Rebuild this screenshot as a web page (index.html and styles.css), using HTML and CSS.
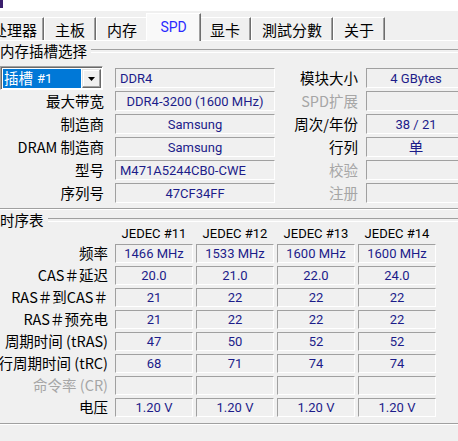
FILE: index.html
```html
<!DOCTYPE html>
<html lang="zh-CN">
<head>
<meta charset="utf-8">
<title>CPU-Z SPD</title>
<link rel="stylesheet" href="styles.css">
</head>
<body>
<div class="topbar"><span class="appmark"></span></div>
<nav class="tabs">
  <div class="tab first">处理器</div>
  <div class="tab">主板</div>
  <div class="tab">内存</div>
  <div class="tab active">SPD</div>
  <div class="tab">显卡</div>
  <div class="tab">測試分數</div>
  <div class="tab">关于</div>
</nav>
<main class="pane">
  <section class="group slots">
    <div class="legend">内存插槽选择</div>
    <div class="slot-grid">
      <div class="combo">
        <span class="combo-sel">插槽 <span class="lat">#1</span></span>
        <span class="combo-btn"><svg width="7" height="4" viewBox="0 0 7 4"><path d="M0 0h7L3.5 4z" fill="#000"/></svg></span>
      </div>
      <div class="val left">DDR4</div>
      <div class="lbl">模块大小</div>
      <div class="val">4 GBytes</div>

      <div class="lbl">最大带宽</div>
      <div class="val">DDR4-3200 (1600 MHz)</div>
      <div class="lbl dim">SPD扩展</div>
      <div class="val"></div>

      <div class="lbl">制造商</div>
      <div class="val">Samsung</div>
      <div class="lbl">周次/年份</div>
      <div class="val">38 / 21</div>

      <div class="lbl">DRAM 制造商</div>
      <div class="val">Samsung</div>
      <div class="lbl">行列</div>
      <div class="val cjk">单</div>

      <div class="lbl">型号</div>
      <div class="val left">M471A5244CB0-CWE</div>
      <div class="lbl dim">校验</div>
      <div class="val"></div>

      <div class="lbl">序列号</div>
      <div class="val">47CF34FF</div>
      <div class="lbl dim">注册</div>
      <div class="val"></div>
    </div>
  </section>

  <section class="group timings">
    <div class="legend">时序表</div>
    <div class="timing-grid">
      <div class="hdr-blank"></div>
      <div class="hdr">JEDEC #11</div>
      <div class="hdr">JEDEC #12</div>
      <div class="hdr">JEDEC #13</div>
      <div class="hdr">JEDEC #14</div>

      <div class="lbl">频率</div>
      <div class="val">1466 MHz</div>
      <div class="val">1533 MHz</div>
      <div class="val">1600 MHz</div>
      <div class="val">1600 MHz</div>

      <div class="lbl">CAS＃延迟</div>
      <div class="val">20.0</div>
      <div class="val">21.0</div>
      <div class="val">22.0</div>
      <div class="val">24.0</div>

      <div class="lbl">RAS＃到CAS＃</div>
      <div class="val">21</div>
      <div class="val">22</div>
      <div class="val">22</div>
      <div class="val">22</div>

      <div class="lbl">RAS＃预充电</div>
      <div class="val">21</div>
      <div class="val">22</div>
      <div class="val">22</div>
      <div class="val">22</div>

      <div class="lbl">周期时间 (tRAS)</div>
      <div class="val">47</div>
      <div class="val">50</div>
      <div class="val">52</div>
      <div class="val">52</div>

      <div class="lbl">行周期时间 (tRC)</div>
      <div class="val">68</div>
      <div class="val">71</div>
      <div class="val">74</div>
      <div class="val">74</div>

      <div class="lbl dim">命令率 (CR)</div>
      <div class="val"></div>
      <div class="val"></div>
      <div class="val"></div>
      <div class="val"></div>

      <div class="lbl">电压</div>
      <div class="val">1.20 V</div>
      <div class="val">1.20 V</div>
      <div class="val">1.20 V</div>
      <div class="val">1.20 V</div>
    </div>
  </section>
</main>
</body>
</html>
```
FILE: styles.css
```css
* { box-sizing: border-box; }
html, body { margin: 0; padding: 0; }
body {
  width: 458px;
  height: 441px;
  overflow: hidden;
  background: #f0f0f0;
  font-family: "Noto Sans CJK SC", "Noto Sans", sans-serif;
  font-size: 14.5px;
  color: #000;
}

.topbar { height: 11px; background: #fff; }
.appmark { display: block; width: 3px; height: 8px; background: #3b1f6d; }

.tabs {
  display: flex;
  align-items: flex-end;
  height: 29px;
  margin-left: -19px;
  position: relative;
  z-index: 1;
}
.tab {
  height: 23px;
  padding: 0 10px;
  display: flex;
  align-items: center;
  justify-content: center;
  font-size: 15px;
  line-height: 1;
  white-space: nowrap;
  background: #f0f0f0;
  border-top: 1px solid #fff;
  border-left: 1px solid #fff;
  border-right: 1px solid #6d6d6d;
  box-shadow: inset -1px 0 #a0a0a0;
}
.tab.first { padding-right: 6px; }
.tab.active {
  width: 55px;
  height: 28px;
  margin: 0 -2px -1px;
  padding: 0 0 1px;
  color: #2a2aff;
  font-family: Roboto, "Noto Sans", sans-serif;
  font-size: 14px;
  background: #f9f9f9;
  position: relative;
  z-index: 2;
}

.pane { border-top: 1px solid #fff; }

.group {
  border-bottom: 1px solid #a0a0a0;
  box-shadow: 0 1px #fff;
}
.legend {
  display: flex;
  align-items: center;
  height: 18px;
  margin-top: 1px;
  line-height: 1;
  white-space: nowrap;
}
.legend::after {
  content: "";
  flex: 1;
  height: 2px;
  margin-left: 4px;
  border-top: 1px solid #a0a0a0;
  border-bottom: 1px solid #fff;
}
.slots { padding-bottom: 5px; }
.timings { padding-bottom: 6px; }
.timings .legend { margin-top: 2px; }

.lbl {
  display: flex;
  align-items: center;
  justify-content: flex-end;
  white-space: nowrap;
  line-height: 1;
}
.lbl.dim { color: #a6a6a6; }

.val {
  display: flex;
  align-items: center;
  justify-content: center;
  padding: 0 5px;
  border: 1px solid;
  border-color: #a0a0a0 #fff #fff #a0a0a0;
  background: #f0f0f0;
  color: #1c1c8a;
  font-family: Roboto, "Noto Sans", sans-serif;
  font-size: 13px;
  line-height: 1;
  white-space: nowrap;
  overflow: hidden;
}
.val.left { justify-content: flex-start; padding-left: 4px; }
.val.cjk { font-family: "Noto Sans CJK SC", sans-serif; font-size: 14.5px; }

.slot-grid {
  display: grid;
  width: 466px;
  margin-top: 8px;
  grid-template-columns: 104px 171px 83px 108px;
  grid-auto-rows: 20px;
  row-gap: 3px;
}
.slot-grid > .val:nth-child(4n+2) { margin-left: 11px; }
.slot-grid > .val:nth-child(4n) { margin-left: 8px; }

.combo {
  display: flex;
  height: 24px;
  margin: -2px 1px 0 0;
  padding: 1px;
  background: #fff;
  border: 1px solid;
  border-color: #a0a0a0 #fff #fff #a0a0a0;
  box-shadow: inset 1px 1px #696969;
}
.combo-sel {
  flex: 1;
  display: flex;
  align-items: center;
  padding-left: 1px;
  margin: 1px 1px 0 1px;
  background: #0078d7;
  color: #fff;
  font-size: 14.5px;
  line-height: 1;
  white-space: nowrap;
}
.combo-sel .lat { font-family: Roboto, sans-serif; font-size: 13px; margin-left: 4px; }
.combo-btn {
  width: 19px;
  margin-top: 1px;
  display: flex;
  align-items: center;
  justify-content: center;
  background: #f0f0f0;
  border: 1px solid;
  border-color: #e3e3e3 #696969 #696969 #e3e3e3;
  box-shadow: inset -1px -1px #a0a0a0, inset 1px 1px #fff;
}

.timing-grid {
  display: grid;
  grid-template-columns: 112px repeat(4, 78px);
  grid-template-rows: 14px;
  grid-auto-rows: 19px;
  column-gap: 3px;
  row-gap: 3px;
  margin-top: -2px;
}
.timing-grid .lbl { padding-right: 4px; }
.hdr {
  text-align: center;
  font-family: Roboto, "Noto Sans", sans-serif;
  font-size: 13px;
  line-height: 14px;
  white-space: nowrap;
  margin-bottom: 1px;
}
```
